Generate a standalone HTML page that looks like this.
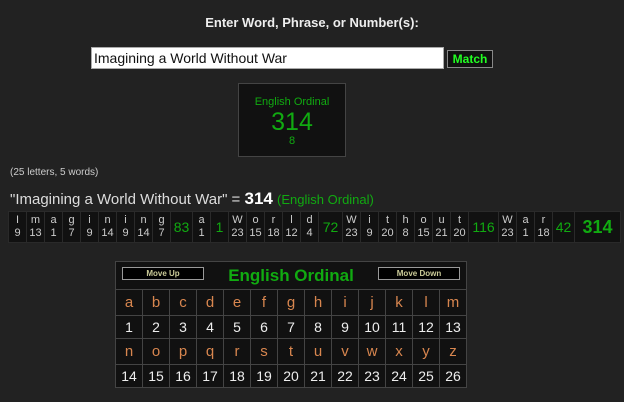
<!DOCTYPE html>
<html><head><meta charset="utf-8"><style>
body{margin:0;background:#222;font-family:"Liberation Sans",Arial,sans-serif;color:#ddd;width:624px;height:402px;overflow:hidden;position:relative}
.abs{position:absolute}
#title{left:20px;width:584px;top:15px;text-align:center;font-weight:bold;font-size:13px;color:#eee}
#inp{left:91px;top:47px;background:#fff;border:1px solid #aaa;box-sizing:border-box;width:353px;height:22px;color:#111;font-size:14px;line-height:20px;padding-left:2px}
#btn{left:447px;top:50px;width:46px;height:18px;background:#111;border:1px solid #888;box-sizing:border-box;color:#2f2;font-weight:bold;font-size:12px;text-align:center;line-height:16px}
#box{left:238px;top:83px;width:108px;height:74px;background:#111;border:1px solid #444;box-sizing:border-box;text-align:center;color:#1a1}
#cnt{left:10px;top:167px;font-size:10px;color:#ccc}
#phr{left:10px;top:189px;font-size:15px;color:#ddd;white-space:nowrap}
table{border-collapse:collapse;table-layout:fixed}
#brk{left:8px;top:211px;background:#111;width:612px}
#brk td{border:1px solid #2a2a2a;text-align:center;padding:0;font-size:11px;line-height:13px;color:#ccc;vertical-align:middle;height:30px}
#brk td.s{color:#1a1;font-size:14px}
#alp{left:115px;top:261px;background:#111}
#alp td{border:1px solid #444;width:26px;text-align:center;padding:0;font-size:14px}
#alp tr.h td{height:27px}
#alp tr.a td{height:25px;color:#d8864f;font-size:15px}
#alp tr.n td{height:22px;color:#eee}
.mv{position:absolute;top:5px;width:80px;height:11px;background:#000;border:1px solid #999;color:#cc9;font-size:8px;font-weight:bold;text-align:center;line-height:11px}
</style></head><body>
<div class="abs" id="title">Enter Word, Phrase, or Number(s):</div>
<div class="abs" id="inp">Imagining a World Without War</div>
<div class="abs" id="btn">Match</div>
<div class="abs" id="box"><div style="font-size:11px;margin-top:12px">English Ordinal</div><div style="font-size:25px;line-height:26px;margin-top:1px">314</div><div style="font-size:11px;line-height:12px">8</div></div>
<div class="abs" id="cnt">(25 letters, 5 words)</div>
<div class="abs" id="phr">"Imagining a World Without War" = <b style="color:#fff;font-size:17px">314</b> <span style="color:#1a1;font-size:13px">(English Ordinal)</span></div>
<table class="abs" id="brk">
<colgroup><col span="9" style="width:18px"><col style="width:22px"><col style="width:18px"><col style="width:18px"><col span="5" style="width:18px"><col style="width:24px"><col span="7" style="width:18px"><col style="width:30px"><col span="3" style="width:18px"><col style="width:22px"><col style="width:46px"></colgroup>
<tr>
<td>I<br>9</td><td>m<br>13</td><td>a<br>1</td><td>g<br>7</td><td>i<br>9</td><td>n<br>14</td><td>i<br>9</td><td>n<br>14</td><td>g<br>7</td><td class="s">83</td>
<td>a<br>1</td><td class="s">1</td>
<td>W<br>23</td><td>o<br>15</td><td>r<br>18</td><td>l<br>12</td><td>d<br>4</td><td class="s">72</td>
<td>W<br>23</td><td>i<br>9</td><td>t<br>20</td><td>h<br>8</td><td>o<br>15</td><td>u<br>21</td><td>t<br>20</td><td class="s">116</td>
<td>W<br>23</td><td>a<br>1</td><td>r<br>18</td><td class="s">42</td><td class="s" style="font-size:18px;font-weight:bold">314</td>
</tr></table>
<table class="abs" id="alp">
<tr class="h"><td colspan="13" style="position:relative;color:#1a1;font-weight:bold;font-size:17px">English Ordinal<div class="mv" style="left:6px">Move Up</div><div class="mv" style="right:6px">Move Down</div></td></tr>
<tr class="a"><td>a</td><td>b</td><td>c</td><td>d</td><td>e</td><td>f</td><td>g</td><td>h</td><td>i</td><td>j</td><td>k</td><td>l</td><td>m</td></tr>
<tr class="n"><td>1</td><td>2</td><td>3</td><td>4</td><td>5</td><td>6</td><td>7</td><td>8</td><td>9</td><td>10</td><td>11</td><td>12</td><td>13</td></tr>
<tr class="a"><td>n</td><td>o</td><td>p</td><td>q</td><td>r</td><td>s</td><td>t</td><td>u</td><td>v</td><td>w</td><td>x</td><td>y</td><td>z</td></tr>
<tr class="n"><td>14</td><td>15</td><td>16</td><td>17</td><td>18</td><td>19</td><td>20</td><td>21</td><td>22</td><td>23</td><td>24</td><td>25</td><td>26</td></tr>
</table>
</body></html>
